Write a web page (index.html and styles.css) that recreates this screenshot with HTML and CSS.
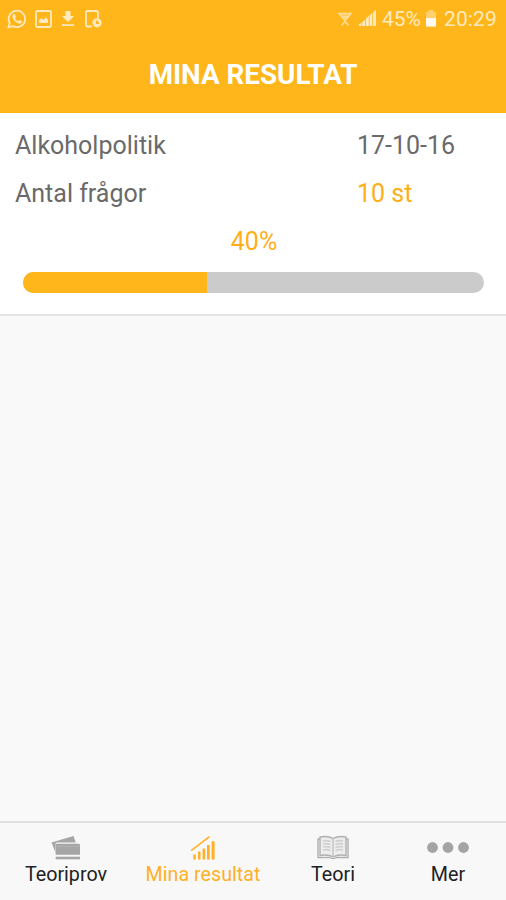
FILE: index.html
```html
<!DOCTYPE html>
<html lang="sv">
<head>
<meta charset="utf-8">
<meta name="viewport" content="width=device-width, initial-scale=1">
<title>Mina resultat</title>
<link rel="stylesheet" href="styles.css">
</head>
<body>
<div class="app">
  <header class="header">
    <div class="status">
      <div class="notifications">
        <svg width="20" height="20" viewBox="0 0 20 20" fill="none" stroke="currentColor" stroke-width="1.8"><path d="M1.500 18.300 2.700 13.800A8.200 8.200 0 1 1 6 17.100Z"/><path d="M6.300 5.200 7.800 5l1.200 3-1 1.200c.7 1.500 1.600 2.300 3.100 3l1.300-1.200 2.500 1.200c.1 1.600-1 2.400-2.400 2.300C8.800 13.800 5.700 10.700 5.400 7.500c0-1 .3-1.700.9-2.300Z" fill="currentColor" stroke="none"/></svg>
        <svg width="17" height="18" viewBox="0 0 17 18" fill="none" stroke="currentColor" stroke-width="1.8"><rect x="1" y="1" width="15" height="16" rx="1.500"/><path d="M4 13V10l2.500-2 2 2 2.500-3 2 3v3Z" fill="currentColor" stroke="none"/></svg>
        <svg width="14" height="17" viewBox="0 0 14 17" fill="currentColor"><path d="M4.500 1h5v5h3.700L7 12 .8 6h3.700ZM1 14.300h12v1.600H1Z"/></svg>
        <svg width="17" height="18" viewBox="0 0 17 18" fill="none" stroke="currentColor" stroke-width="1.800"><path d="M7 16.500H2.500Q1 16.500 1 15V2.500Q1 1 2.500 1h9Q13 1 13 2.500V8"/><circle cx="12" cy="12.800" r="4.600" fill="currentColor" stroke="none"/><path class="clock-hand" d="M11.800 10.500v2.700H14"/></svg>
      </div>
      <div class="system">
        <svg class="wifi" width="14" height="16" viewBox="0 0 14 16" fill="none" stroke="currentColor" stroke-width="1.400"><path d="M1 2.500H13L7 9.500Z" fill="currentColor" fill-opacity=".55"/><path d="m3.500 14.500 3.500-4 3.500 4M3 6h8"/></svg>
        <svg class="signal" width="17" height="17" viewBox="0 0 17 17" fill="currentColor"><path d="M0 16v-2l2.500-1v3ZM3.200 16v-4l2.800-2v6ZM6.800 16V8.500L9.800 6v10ZM10.500 16V5.200L13.300 3v13ZM14 16V2l3-2v16Z"/></svg>
        <span class="charge">45%</span>
        <svg class="battery" width="12" height="17" viewBox="0 0 12 17"><path d="M3.500 0h5v2H11v14.500H1V2h2.500Z" fill="currentColor" opacity=".5"/><path d="M1 8h10v8.500H1Z" fill="#fffaf0"/></svg>
        <span class="time">20:29</span>
      </div>
    </div>
    <h1 class="title">MINA RESULTAT</h1>
  </header>
  <main class="content">
    <section class="result">
      <div class="row"><span class="name">Alkoholpolitik</span><span class="date">17-10-16</span></div>
      <div class="row"><span class="count-label">Antal frågor</span><span class="count">10 st</span></div>
      <div class="percent">40%</div>
      <div class="track"><div class="fill" style="width: 40%"></div></div>
    </section>
  </main>
  <nav class="tabs">
    <a class="tab">
      <svg width="30" height="26" viewBox="0 0 30 26" fill="#a6a6a6"><path d="M.5 7.500 22.500 1 24.800 7.500H6Q4.500 7.500 4.500 9v8.500Z"/><path d="M4.700 10Q4.700 8.700 6 8.700H27.700Q29 8.700 29 10V19.800H4.700Z"/><path d="M4.700 21.700H29v2.600H4.700Z"/><path d="M5 11.500h24" stroke="#b8b8b8" stroke-width=".7"/></svg>
      <span class="label">Teoriprov</span>
    </a>
    <a class="tab active">
      <svg width="26" height="26" viewBox="0 0 26 26" fill="currentColor"><path d="M3.300 19.500h2.500v5H3.300ZM8 16.500h2.500v8H8ZM12.600 13.500h2.600v11h-2.600ZM17 10h2.700v14.500H17ZM21.600 6.300h3v18.200h-3Z"/><path d="M1.200 15.700 19.500 1.700" fill="none" stroke="currentColor" stroke-width="1.600"/></svg>
      <span class="label">Mina resultat</span>
    </a>
    <a class="tab">
      <svg width="34" height="26" viewBox="0 0 34 26" fill="none" stroke="#b0b0b0" stroke-width="1.400"><path d="M4 2Q12 .5 17 3.500 22 .5 30 2V20.500Q22 19 17 22 12 19 4 20.500Z" fill="#ededed"/><path d="M4 4H2V22.500H13.500q3.500 2 7 0H32V4h-2"/><path d="M17 3.500V22" stroke="#c2c2c2"/><path d="M7 6q4-1 7.500.5M7 9q4-1 7.500.5M7 12q4-1 7.500.5M7 15q4-1 7.500.5M19.500 6.500q3.500-1.500 7.500-.5M19.500 9.500q3.500-1.500 7.500-.5M19.500 12.500q3.500-1.500 7.500-.5M19.500 15.500q3.500-1.500 7.500-.5" stroke="#d0d0d0" stroke-width="1.800"/></svg>
      <span class="label">Teori</span>
    </a>
    <a class="tab">
      <svg width="44" height="26" viewBox="0 0 44 26" fill="#a4a4a4"><circle cx="6.500" cy="12.500" r="5.400"/><circle cx="22" cy="12.500" r="5.400"/><circle cx="37.500" cy="12.500" r="5.400"/></svg>
      <span class="label">Mer</span>
    </a>
  </nav>
</div>
</body>
</html>
```
FILE: styles.css
```css
* { box-sizing: border-box; }
body { margin: 0; font-family: Roboto, "Liberation Sans", sans-serif; }
.app { display: flex; flex-direction: column; width: 506px; height: 900px; background: #f9f9f9; overflow: hidden; }
.header { height: 113px; flex: none; background: #ffb61b; color: #fff; }
.status { display: flex; justify-content: space-between; height: 37px; padding: 0 9px 0 7px; color: #ffeabd; }
.notifications, .system { display: flex; align-items: center; }
.notifications { gap: 8px; }
.notifications svg:nth-child(3) { margin: 0 2px 0 1px; }
.clock-hand { stroke: #ffb61b; }
.wifi { margin-right: 7px; opacity: .8; }
.signal { margin-right: 6px; }
.charge, .time { font-size: 21px; line-height: 38px; white-space: nowrap; }
.charge { width: 39px; }
.battery { margin: 0 7px 0 4px; }
.time { width: 53px; letter-spacing: .1px; }
.title { margin: 0; height: 76px; font-size: 27.8px; line-height: 76px; font-weight: 700; text-align: center; }
.content { flex: 1; }
.result { height: 203px; padding: 9px 22px 0 15px; background: #fff; border-bottom: 2px solid #e4e4e4; }
.row { display: grid; grid-template-columns: 342px 1fr; height: 48px; line-height: 48px; font-size: 25px; color: #6a6a6a; }
.row span { justify-self: start; white-space: nowrap; }
.row .count, .percent { color: #ffae18; }
.percent { height: 48px; padding-left: 9px; font-size: 25px; line-height: 48px; text-align: center; }
.track { height: 21px; margin: 6px 0 0 8px; border-radius: 11px; background: #cbcbcb; overflow: hidden; }
.fill { height: 100%; background: #ffb61b; }
.tabs { display: grid; grid-template-columns: 132px 142px 118px 112px; height: 79px; padding-top: 12px; background: #f8f8f8; border-top: 2px solid #dfdfdf; }
.tab { display: flex; flex-direction: column; align-items: center; color: #222; }
.tab.active { color: #ffb027; }
.label { font-size: 19.7px; line-height: 27px; white-space: nowrap; }
```
